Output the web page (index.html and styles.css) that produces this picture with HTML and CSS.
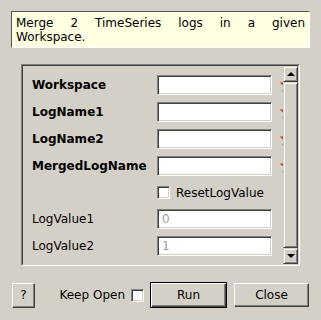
FILE: index.html
```html
<!DOCTYPE html>
<html lang="en">
<head>
  <meta charset="UTF-8">
  <title>MergeLogs</title>
  <link rel="stylesheet" href="styles.css">
</head>
<body>
  <div class="dialog">
    <div class="desc">Merge 2 TimeSeries logs in a given Workspace.</div>

    <div class="props">
      <div class="props-frame">
        <div class="props-body">
          <div class="row">
            <span class="name bold">Workspace</span>
            <div class="field"></div>
            <svg class="star" width="16" height="16" viewBox="0 0 16 16"><path d="M8 0L9.88 5.41L15.61 5.53L11.04 8.99L12.7 14.47L8 11.2L3.3 14.47L4.96 8.99L0.39 5.53L6.12 5.41Z"/></svg>
          </div>
          <div class="row">
            <span class="name bold">LogName1</span>
            <div class="field"></div>
            <svg class="star" width="16" height="16" viewBox="0 0 16 16"><path d="M8 0L9.88 5.41L15.61 5.53L11.04 8.99L12.7 14.47L8 11.2L3.3 14.47L4.96 8.99L0.39 5.53L6.12 5.41Z"/></svg>
          </div>
          <div class="row">
            <span class="name bold">LogName2</span>
            <div class="field"></div>
            <svg class="star" width="16" height="16" viewBox="0 0 16 16"><path d="M8 0L9.88 5.41L15.61 5.53L11.04 8.99L12.7 14.47L8 11.2L3.3 14.47L4.96 8.99L0.39 5.53L6.12 5.41Z"/></svg>
          </div>
          <div class="row">
            <span class="name bold">MergedLogName</span>
            <div class="field"></div>
            <svg class="star" width="16" height="16" viewBox="0 0 16 16"><path d="M8 0L9.88 5.41L15.61 5.53L11.04 8.99L12.7 14.47L8 11.2L3.3 14.47L4.96 8.99L0.39 5.53L6.12 5.41Z"/></svg>
          </div>
          <div class="row check-row">
            <span class="checkbox"></span>
            <span class="check-label">ResetLogValue</span>
          </div>
          <div class="row">
            <span class="name">LogValue1</span>
            <div class="field">0</div>
          </div>
          <div class="row">
            <span class="name">LogValue2</span>
            <div class="field">1</div>
          </div>
        </div>

        <div class="scrollbar">
          <div class="sb-btn up"></div>
          <div class="sb-thumb"></div>
          <div class="sb-btn down"></div>
        </div>
      </div>
    </div>

    <div class="buttons">
      <button class="btn help">?</button>
      <span class="keep-open">Keep Open</span>
      <span class="checkbox keep-box"></span>
      <button class="btn run">Run</button>
      <button class="btn close">Close</button>
    </div>
  </div>
</body>
</html>
```

FILE: styles.css
```css
body {
  margin: 0;
  background-color: #d4d0c8;
  font-family: "DejaVu Sans", sans-serif;
  font-size: 12px;
  color: #000;
}

.dialog {
  padding: 11px 11px 0 11px;
  display: flex;
  flex-direction: column;
}

.desc {
  background-color: #ffffe1;
  border: 1px solid;
  border-color: #555 #fff #fff #555;
  padding: 4px 4px 3px 4px;
  line-height: 14px;
  text-align: justify;
  word-spacing: 3px;
}

/* sunken frame round the property list */
.props {
  margin: 16px 10px 0 10px;
  border: 1px solid;
  border-color: #808080 #fff #fff #808080;
}

.props-frame {
  display: flex;
  height: 198px;
  border: 1px solid;
  border-color: #404040 #d4d0c8 #d4d0c8 #404040;
}

.props-body {
  flex: 1;
  overflow: hidden;
  padding: 9px 0 0 9px;
  display: flex;
  flex-direction: column;
  gap: 7px;
}

.row {
  display: flex;
  align-items: center;
  height: 20px;
  flex-shrink: 0;
}

.name {
  width: 125px;
  flex-shrink: 0;
  white-space: nowrap;
}

.bold {
  font-weight: bold;
}

.field {
  width: 115px;
  height: 20px;
  flex-shrink: 0;
  box-sizing: border-box;
  background-color: #fff;
  border: 1px solid;
  border-color: #808080 #fff #fff #808080;
  box-shadow: inset 1px 1px #404040, inset -1px -1px #d4d0c8;
  padding-left: 4px;
  line-height: 18px;
  color: #a0a0a0;
}

.star {
  flex-shrink: 0;
  margin-left: 7px;
  fill: #cc3333;
}

.check-row {
  height: 19px;
  padding-left: 125px;
}

.checkbox {
  width: 13px;
  height: 13px;
  flex-shrink: 0;
  box-sizing: border-box;
  background-color: #fff;
  border: 1px solid;
  border-color: #808080 #fff #fff #808080;
  box-shadow: inset 1px 1px #404040, inset -1px -1px #d4d0c8;
}

.check-label {
  margin-left: 6px;
  white-space: nowrap;
}

/* scrollbar */
.scrollbar {
  width: 15px;
  display: flex;
  flex-direction: column;
}

.sb-btn, .sb-thumb {
  box-sizing: border-box;
  background-color: #d4d0c8;
  border: 1px solid;
  border-color: #d4d0c8 #404040 #404040 #d4d0c8;
  box-shadow: inset 1px 1px #fff, inset -1px -1px #808080;
}

.sb-btn {
  height: 16px;
  display: flex;
  justify-content: center;
  align-items: center;
}

.sb-thumb {
  flex: 1;
}

.sb-btn::before {
  content: '';
  width: 0;
  height: 0;
  border-left: 4px solid transparent;
  border-right: 4px solid transparent;
}

.up::before {
  border-bottom: 4px solid #000;
}

.down::before {
  border-top: 4px solid #000;
}

/* bottom buttons */
.buttons {
  display: flex;
  align-items: center;
  margin-top: 16px;
  padding: 0 1px;
}

.btn {
  box-sizing: border-box;
  height: 24px;
  margin: 0;
  padding: 0;
  font: inherit;
  color: #000;
  background-color: #d4d0c8;
  border: 1px solid;
  border-color: #fff #404040 #404040 #fff;
  box-shadow: inset -1px -1px #808080;
}

.help {
  width: 23px;
  height: 25px;
}

.keep-open {
  margin-left: auto;
}

.keep-box {
  margin-left: 6px;
}

.run {
  width: 77px;
  height: 26px;
  margin-left: 6px;
  outline: none;
  border-color: #000;
  box-shadow: inset 1px 1px #fff, inset -1px -1px #404040, inset -2px -2px #808080;
}

.close {
  width: 75px;
  margin-left: 7px;
}
```
